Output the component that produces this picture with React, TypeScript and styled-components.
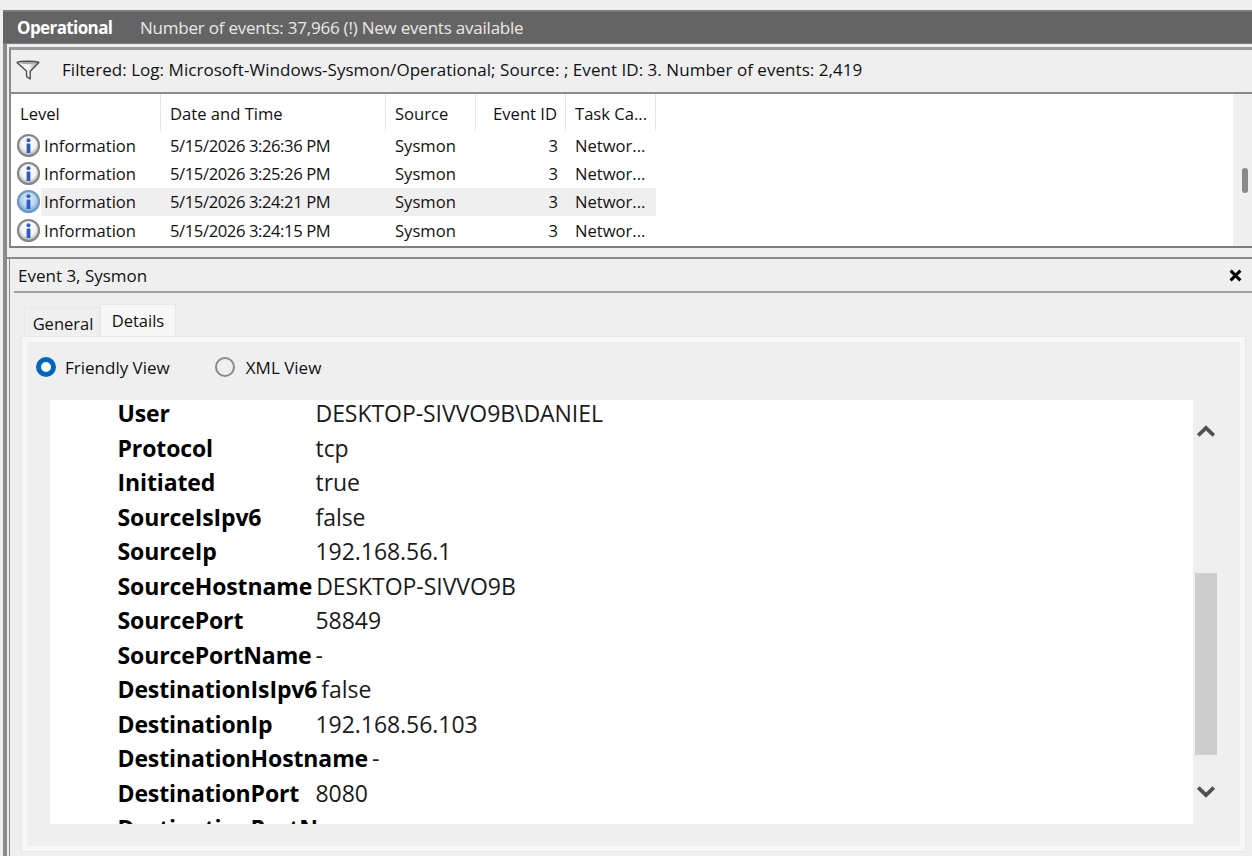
import React from "react";
import styled, { createGlobalStyle } from "styled-components";

const GlobalStyle = createGlobalStyle`
  html, body {
    margin: 0;
    padding: 0;
    height: 856px;
    overflow: hidden;
    background: #efefef;
    font-family: "Open Sans", "Noto Sans", "Liberation Sans", sans-serif;
    color: #111;
  }
  * { box-sizing: border-box; }
`;

const Page = styled.div`
  width: 1252px;
  height: 856px;
  padding: 10px 0 0 3px;
  overflow: hidden;
  background: #efefef;
`;

const Frame = styled.div`
  height: 846px;
  border-left: 4px solid #8a8a8a;
  display: flex;
  flex-direction: column;
`;

const LogHeader = styled.div`
  height: 34px;
  margin-left: -4px;
  background: #646464;
  border-top: 2px solid #7c7c7c;
  border-bottom: 1px solid #7c7c7c;
  display: flex;
  align-items: center;
  padding-left: 14px;
  color: #fff;
  font-size: 17px;
  letter-spacing: -0.22px;
  white-space: nowrap;
  b {
    font-weight: 700;
    width: 123px;
    letter-spacing: -0.6px;
  }
  span {
    color: #e8e8e8;
  }
`;

const FilterBar = styled.div`
  height: 47px;
  margin-top: 3px;
  margin-left: 2px;
  background: #efefef;
  border-top: 3px solid #9a9a9a;
  border-left: 2px solid #8a8a8a;
  border-bottom: 2px solid #8a8a8a;
  display: flex;
  align-items: center;
  padding: 0 0 3px 5px;
  gap: 22px;
  font-size: 17px;
  letter-spacing: 0.04px;
  white-space: nowrap;
`;

const ListPane = styled.div`
  height: 154px;
  margin-left: 2px;
  background: #fff;
  border-left: 2px solid #8a8a8a;
  border-bottom: 2px solid #7d7d7d;
  display: flex;
`;

const EventTable = styled.div`
  flex: 1;
`;

const HeaderRow = styled.div`
  display: grid;
  grid-template-columns: 150px 225px 90px 90px 90px;
  width: 645px;
  height: 37px;
`;

const HeaderCell = styled.div<{ $right?: boolean }>`
  font-size: 16.6px;
  display: flex;
  align-items: center;
  justify-content: ${(p) => (p.$right ? "flex-end" : "flex-start")};
  padding: 2px 8px 0 9px;
  border-right: 1px solid #e5e5e5;
  white-space: nowrap;
`;

const Row = styled.div<{ $selected?: boolean }>`
  display: grid;
  grid-template-columns: 150px 225px 90px 90px 90px;
  width: 645px;
  height: 28.4px;
  font-size: 16.6px;
  white-space: nowrap;
  background: ${(p) =>
    p.$selected
      ? "linear-gradient(90deg, transparent 30px, #efefef 30px)"
      : "transparent"};
`;

const Cell = styled.div<{ $right?: boolean }>`
  display: flex;
  align-items: center;
  justify-content: ${(p) => (p.$right ? "flex-end" : "flex-start")};
  padding: 0 8px 0 9px;
`;

const TimeCell = styled(Cell)`
  letter-spacing: -0.4px;
`;

const LevelCell = styled(Cell)`
  padding: 0 0 0 5px;
  gap: 3px;
`;

const ListScroll = styled.div`
  width: 19px;
  background: #efefef;
  padding: 74px 4px 0 9px;
`;

const ListThumb = styled.div`
  width: 6px;
  height: 25px;
  border-radius: 3px;
  background: #8a8a8a;
`;

const Splitter = styled.div`
  height: 11px;
  background: #efefef;
  border-bottom: 2px solid #8a8a8a;
`;

const DetailBody = styled.div`
  flex: 1;
  margin-left: 2px;
  border-left: 1px solid #8a8a8a;
  background: #efefef;
`;

const DetailTitle = styled.div`
  height: 34px;
  margin-left: 4px;
  border-bottom: 2px solid #a0a0a0;
  display: flex;
  align-items: center;
  justify-content: space-between;
  padding: 0 10px 0 4px;
  font-size: 17px;
`;

const TabStrip = styled.div`
  height: 44px;
  padding: 10px 0 0 14px;
  display: flex;
  align-items: flex-end;
`;

const Tab = styled.div<{ $active?: boolean }>`
  width: 76px;
  height: ${(p) => (p.$active ? "33px" : "30px")};
  background: ${(p) => (p.$active ? "#f7f7f7" : "#efefef")};
  border: 1px solid #e8e8e8;
  border-bottom: 0;
  display: flex;
  justify-content: center;
  align-items: center;
  padding: ${(p) => (p.$active ? "0 0 1px" : "2px 0 0 2px")};
  font-size: 16.5px;
`;

const TabPanel = styled.div`
  height: 514px;
  margin: 0 7px 0 12px;
  border: 5px solid #f7f7f7;
  background: #efefef;
  outline: 1px solid #e8e8e8;
`;

const ViewPicker = styled.div`
  height: 58px;
  display: flex;
  align-items: center;
  padding: 0 0 8px 9px;
  font-size: 17px;
`;

const Radio = styled.label<{ $gap: number }>`
  display: flex;
  align-items: center;
  gap: ${(p) => p.$gap}px;
  margin-right: 45px;
`;

const RadioDot = styled.span<{ $on?: boolean }>`
  width: 20px;
  height: 20px;
  border-radius: 50%;
  background: ${(p) => (p.$on ? "#fff" : "#efefef")};
  border: ${(p) => (p.$on ? "5.5px solid #0067c0" : "2px solid #8a8a8a")};
`;

const Viewer = styled.div`
  display: flex;
  height: 424px;
  margin-left: 23px;
`;

const ViewerText = styled.div`
  width: 1143px;
  height: 424px;
  overflow: hidden;
  background: #fff;
  padding-left: 67.5px;
  font-size: 23px;
`;

const FieldRow = styled.div`
  height: 34.55px;
  line-height: 27px;
  display: flex;
  white-space: nowrap;
`;

const FieldName = styled.div`
  min-width: 198px;
  font-weight: 700;
  letter-spacing: -0.12px;
  color: #000;
  padding-right: 4px;
`;

const FieldValue = styled.div`
  color: #1a1a1a;
  letter-spacing: -0.05px;
`;

const ViewerScroll = styled.div`
  width: 22px;
  margin-left: 2px;
  height: 424px;
  display: flex;
  flex-direction: column;
`;

const ArrowBox = styled.div`
  height: 173px;
  padding-top: 24px;
  display: flex;
  justify-content: center;
`;

const ViewerThumb = styled.div`
  width: 22px;
  height: 182px;
  background: #cdcdcd;
`;

const DownBox = styled.div`
  padding-top: 30px;
  display: flex;
  justify-content: center;
`;

const InfoIcon = ({ selected }: { selected?: boolean }) => {
  const id = selected ? "infoBlue" : "infoGrey";
  return (
    <svg width="25" height="25" viewBox="0 0 25 25">
      <defs>
        <radialGradient id={id} cx="0.5" cy="0.42" r="0.55">
          <stop offset="0" stopColor={selected ? "#e4f0fb" : "#ffffff"} />
          <stop offset="0.62" stopColor={selected ? "#b4d3f0" : "#f4f4f4"} />
          <stop offset="1" stopColor={selected ? "#6fa3d6" : "#a8a8a8"} />
        </radialGradient>
      </defs>
      <circle
        cx="12.5"
        cy="12.5"
        r="10.6"
        fill={`url(#${id})`}
        stroke={selected ? "#6d97bf" : "#858585"}
        strokeWidth="2"
      />
      <circle cx="12.5" cy="7.2" r="2" fill="#2a5cc4" />
      <rect x="10.6" y="10.4" width="3.8" height="9.6" rx="0.6" fill="#2a5cc4" />
    </svg>
  );
};

const FunnelIcon = () => (
  <svg width="24" height="20" viewBox="0 0 24 20">
    <defs>
      <linearGradient id="funnel" x1="0" y1="0" x2="1" y2="0">
        <stop offset="0" stopColor="#dedede" />
        <stop offset="0.5" stopColor="#ffffff" />
        <stop offset="1" stopColor="#8c8c8c" />
      </linearGradient>
    </defs>
    <path
      d="M1 2.5C4 0.8 20 0.8 23 2.5L14.2 11.2V19L10.6 16.6V11.2z"
      fill="url(#funnel)"
      stroke="#4e4e4e"
      strokeWidth="1.4"
      strokeLinejoin="round"
    />
    <path d="M3.5 3C7 4.6 17 4.6 20.5 3C17 1.8 7 1.8 3.5 3z" fill="#a8a8a8" />
  </svg>
);

const CloseIcon = () => (
  <svg width="13" height="13" viewBox="0 0 13 13">
    <path d="M1.6 1.6l9.8 9.8M11.4 1.6l-9.8 9.8" stroke="#000" strokeWidth="3" />
  </svg>
);

const Chevron = ({ up }: { up?: boolean }) => (
  <svg width="18" height="14" viewBox="0 0 18 14">
    <path
      d={up ? "M1.2 11.5L9 4l7.8 7.5" : "M1.2 2.5L9 10l7.8-7.5"}
      fill="none"
      stroke="#505050"
      strokeWidth="3.8"
    />
  </svg>
);

const events = [
  { time: "5/15/2026 3:26:36 PM" },
  { time: "5/15/2026 3:25:26 PM" },
  { time: "5/15/2026 3:24:21 PM", selected: true },
  { time: "5/15/2026 3:24:15 PM" },
];

const fields = [
  ["User", "DESKTOP-SIVVO9B\\DANIEL"],
  ["Protocol", "tcp"],
  ["Initiated", "true"],
  ["SourceIsIpv6", "false"],
  ["SourceIp", "192.168.56.1"],
  ["SourceHostname", "DESKTOP-SIVVO9B"],
  ["SourcePort", "58849"],
  ["SourcePortName", "-"],
  ["DestinationIsIpv6", "false"],
  ["DestinationIp", "192.168.56.103"],
  ["DestinationHostname", "-"],
  ["DestinationPort", "8080"],
  ["DestinationPortName", "-"],
];

const App = () => {
  return (
    <Page>
      <GlobalStyle />
      <Frame>
        <LogHeader>
          <b>Operational</b>
          <span>Number of events: 37,966 (!) New events available</span>
        </LogHeader>
        <FilterBar>
          <FunnelIcon />
          <div>
            Filtered: Log: Microsoft-Windows-Sysmon/Operational; Source: ; Event
            ID: 3. Number of events: 2,419
          </div>
        </FilterBar>
        <ListPane>
          <EventTable>
            <HeaderRow>
              <HeaderCell>Level</HeaderCell>
              <HeaderCell>Date and Time</HeaderCell>
              <HeaderCell>Source</HeaderCell>
              <HeaderCell $right>Event ID</HeaderCell>
              <HeaderCell>Task Ca...</HeaderCell>
            </HeaderRow>
            {events.map((ev) => (
              <Row key={ev.time} $selected={ev.selected}>
                <LevelCell>
                  <InfoIcon selected={ev.selected} />
                  Information
                </LevelCell>
                <TimeCell>{ev.time}</TimeCell>
                <Cell>Sysmon</Cell>
                <Cell $right>3</Cell>
                <Cell>Networ...</Cell>
              </Row>
            ))}
          </EventTable>
          <ListScroll>
            <ListThumb />
          </ListScroll>
        </ListPane>
        <Splitter />
        <DetailBody>
          <DetailTitle>
            Event 3, Sysmon
            <CloseIcon />
          </DetailTitle>
          <TabStrip>
            <Tab>General</Tab>
            <Tab $active>Details</Tab>
          </TabStrip>
          <TabPanel>
            <ViewPicker>
              <Radio $gap={9}>
                <RadioDot $on />
                Friendly View
              </Radio>
              <Radio $gap={11}>
                <RadioDot />
                XML View
              </Radio>
            </ViewPicker>
            <Viewer>
              <ViewerText>
                {fields.map(([name, value]) => (
                  <FieldRow key={name}>
                    <FieldName>{name}</FieldName>
                    <FieldValue>{value}</FieldValue>
                  </FieldRow>
                ))}
              </ViewerText>
              <ViewerScroll>
                <ArrowBox>
                  <Chevron up />
                </ArrowBox>
                <ViewerThumb />
                <DownBox>
                  <Chevron />
                </DownBox>
              </ViewerScroll>
            </Viewer>
          </TabPanel>
        </DetailBody>
      </Frame>
    </Page>
  );
};

export default App;
